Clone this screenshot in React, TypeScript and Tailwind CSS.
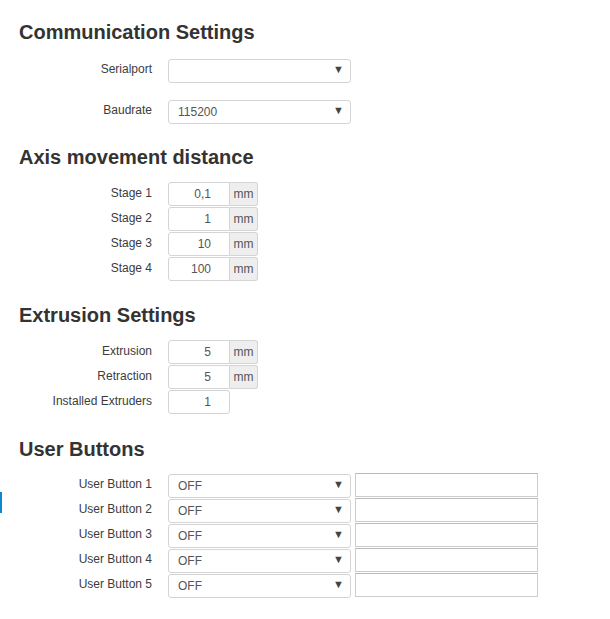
import { ChangeEvent, useState } from 'react'

const STAGES = [
  { label: 'Stage 1', value: '0,1' },
  { label: 'Stage 2', value: '1' },
  { label: 'Stage 3', value: '10' },
  { label: 'Stage 4', value: '100' },
]

const USER_BUTTONS = [1, 2, 3, 4, 5]

function Heading({ children, className = '' }: { children: string; className?: string }) {
  return (
    <h3 className={`text-[20px] leading-[24px] font-bold text-[#333] ${className}`}>{children}</h3>
  )
}

function Row({ label, children }: { label: string; children: React.ReactNode }) {
  return (
    <div className="flex items-center h-[24px]">
      <label className="w-[133px] text-right text-[12px] text-[#3c3c3c] leading-[24px] pb-[3px]">{label}</label>
      <div className="ml-[16px] flex h-full">{children}</div>
    </div>
  )
}

function Select({ value, options }: { value: string; options: string[] }) {
  return (
    <div className="relative w-[183px] h-[24px]">
      <select
        defaultValue={value}
        className="appearance-none w-full h-full rounded-[3px] border border-[#d4d4d4] bg-white pl-[9px] pr-6 text-[12px] text-[#555] outline-none"
      >
        {options.map((o) => (
          <option key={o} value={o}>{o}</option>
        ))}
      </select>
      <span className="pointer-events-none absolute right-[7px] top-[5px] text-[11px] leading-[13px] text-[#444]">▼</span>
    </div>
  )
}

function NumberField({ initial, unit }: { initial: string; unit?: boolean }) {
  const [val, setVal] = useState(initial)
  return (
    <div className="flex h-[24px]">
      <input
        value={val}
        onChange={(e: ChangeEvent<HTMLInputElement>) => setVal(e.target.value)}
        className={`w-[62px] h-full border border-[#d4d4d4] bg-white pr-[18px] text-right text-[12px] text-[#555] outline-none ${unit ? 'rounded-l-[3px]' : 'rounded-[3px]'}`}
      />
      {unit && (
        <span className="w-[28px] h-full flex items-center justify-center border border-l-0 border-[#d4d4d4] rounded-r-[3px] bg-[#eee] text-[12px] text-[#555] pb-[1px]">
          mm
        </span>
      )}
    </div>
  )
}

export default function App() {
  return (
    <div
      className="relative min-h-[619px] bg-white pl-[19px] pt-[20px]"
      style={{ fontFamily: '"Liberation Sans", Arial, sans-serif' }}
    >
      <span className="absolute left-0 top-[492px] w-[2px] h-[21px] bg-[#0a88d4]" />

      <Heading>Communication Settings</Heading>
      <div className="mt-[14px] flex flex-col gap-[17px]">
        <Row label="Serialport">
          <Select value="" options={['']} />
        </Row>
        <Row label="Baudrate">
          <Select value="115200" options={['9600', '57600', '115200', '250000']} />
        </Row>
      </div>

      <Heading className="mt-[22px]">Axis movement distance</Heading>
      <div className="mt-[13px] flex flex-col gap-[1px]">
        {STAGES.map((s) => (
          <Row key={s.label} label={s.label}>
            <NumberField initial={s.value} unit />
          </Row>
        ))}
      </div>

      <Heading className="mt-[22px]">Extrusion Settings</Heading>
      <div className="mt-[13px] flex flex-col gap-[1px]">
        <Row label="Extrusion">
          <NumberField initial="5" unit />
        </Row>
        <Row label="Retraction">
          <NumberField initial="5" unit />
        </Row>
        <Row label="Installed Extruders">
          <NumberField initial="1" />
        </Row>
      </div>

      <Heading className="mt-[23px]">User Buttons</Heading>
      <div className="mt-[12px] flex flex-col gap-[1px]">
        {USER_BUTTONS.map((n) => (
          <Row key={n} label={`User Button ${n}`}>
            <Select value="OFF" options={['OFF', 'ON']} />
            <input className="ml-[4px] w-[183px] h-full border border-[#ccc] border-t-[#bbb] bg-white px-2 text-[12px] text-[#555] outline-none" />
          </Row>
        ))}
      </div>
    </div>
  )
}
